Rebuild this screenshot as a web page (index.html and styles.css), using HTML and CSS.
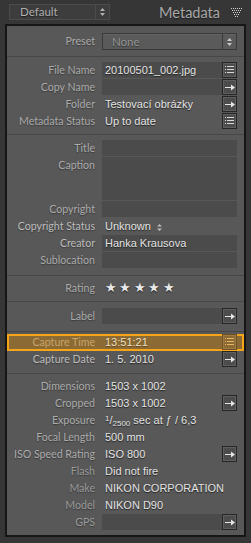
FILE: index.html
```html
<!DOCTYPE html>
<html lang="en">
<head>
  <meta charset="UTF-8" />
  <title>Metadata</title>
  <link rel="stylesheet" href="styles.css">
</head>
<body>
  <div class="topbar">
    <div class="picker">
      <span class="picker-text">Default</span>
      <span class="spin"><svg width="5" height="8" viewBox="0 0 5 8"><path d="M2.5 0L5 3H0z M0 5h5L2.5 8z" fill="#b0b0b0"/></svg></span>
    </div>
    <div class="title">Metadata</div>
    <svg class="collapse" width="11" height="9" viewBox="0 0 11 9">
      <g fill="#d0d0d0">
        <rect x="0" y="0" width="1" height="1"/><rect x="2" y="0" width="1" height="1"/><rect x="4" y="0" width="1" height="1"/><rect x="6" y="0" width="1" height="1"/><rect x="8" y="0" width="1" height="1"/><rect x="10" y="0" width="1" height="1"/>
        <rect x="1" y="2" width="1" height="1"/><rect x="3" y="2" width="1" height="1"/><rect x="5" y="2" width="1" height="1"/><rect x="7" y="2" width="1" height="1"/><rect x="9" y="2" width="1" height="1"/>
        <rect x="2" y="4" width="1" height="1"/><rect x="4" y="4" width="1" height="1"/><rect x="6" y="4" width="1" height="1"/><rect x="8" y="4" width="1" height="1"/>
        <rect x="3" y="6" width="1" height="1"/><rect x="5" y="6" width="1" height="1"/><rect x="7" y="6" width="1" height="1"/>
        <rect x="4" y="8" width="1" height="1"/><rect x="6" y="8" width="1" height="1"/>
      </g>
    </svg>
  </div>

  <div class="panel">
    <section class="group preset-group">
      <div class="row">
        <span class="label">Preset</span>
        <div class="select">
          <span class="select-text">None</span>
          <span class="spin"><svg width="5" height="8" viewBox="0 0 5 8"><path d="M2.5 0L5 3H0z M0 5h5L2.5 8z" fill="#c8c8c8"/></svg></span>
        </div>
      </div>
    </section>

    <section class="group g-file">
      <div class="row">
        <span class="label">File Name</span>
        <div class="value"><span class="field">20100501_002.jpg</span><span class="btn list"></span></div>
      </div>
      <div class="row">
        <span class="label">Copy Name</span>
        <div class="value"><span class="field"></span><span class="btn arrow"></span></div>
      </div>
      <div class="row">
        <span class="label">Folder</span>
        <div class="value"><span class="text">Testovací obrázky</span><span class="btn arrow"></span></div>
      </div>
      <div class="row">
        <span class="label">Metadata Status</span>
        <div class="value"><span class="text">Up to date</span><span class="btn list"></span></div>
      </div>
    </section>

    <section class="group g-desc">
      <div class="row">
        <span class="label">Title</span>
        <div class="value"><span class="field"></span></div>
      </div>
      <div class="row caption">
        <span class="label">Caption</span>
        <div class="value"><span class="field"></span></div>
      </div>
      <div class="row">
        <span class="label">Copyright</span>
        <div class="value"><span class="field"></span></div>
      </div>
      <div class="row">
        <span class="label bright">Copyright Status</span>
        <div class="value"><span class="text">Unknown <svg class="mini-spin" width="5" height="7" viewBox="0 0 5 7"><path d="M2.5 0L5 2.6H0z M0 4.4h5L2.5 7z" fill="#bdbdbd"/></svg></span></div>
      </div>
      <div class="row">
        <span class="label bright">Creator</span>
        <div class="value"><span class="field">Hanka Krausova</span></div>
      </div>
      <div class="row">
        <span class="label">Sublocation</span>
        <div class="value"><span class="field"></span></div>
      </div>
    </section>

    <section class="group g-rating">
      <div class="row">
        <span class="label">Rating</span>
        <div class="value"><span class="stars">★★★★★</span></div>
      </div>
    </section>

    <section class="group g-label">
      <div class="row">
        <span class="label">Label</span>
        <div class="value"><span class="field"></span><span class="btn arrow"></span></div>
      </div>
    </section>

    <section class="group g-capture">
      <div class="row active">
        <span class="label">Capture Time</span>
        <div class="value"><span class="text">13:51:21</span><span class="btn list"></span></div>
      </div>
      <div class="row">
        <span class="label bright">Capture Date</span>
        <div class="value"><span class="text">1. 5. 2010</span><span class="btn arrow"></span></div>
      </div>
    </section>

    <section class="group g-exif">
      <div class="row">
        <span class="label">Dimensions</span>
        <div class="value"><span class="text">1503 x 1002</span></div>
      </div>
      <div class="row">
        <span class="label">Cropped</span>
        <div class="value"><span class="text">1503 x 1002</span><span class="btn arrow"></span></div>
      </div>
      <div class="row">
        <span class="label">Exposure</span>
        <div class="value"><span class="text"><sup>1</sup>/<sub>2500</sub> sec at <i>ƒ</i> / 6,3</span></div>
      </div>
      <div class="row">
        <span class="label">Focal Length</span>
        <div class="value"><span class="text">500 mm</span></div>
      </div>
      <div class="row">
        <span class="label">ISO Speed Rating</span>
        <div class="value"><span class="text">ISO 800</span><span class="btn arrow"></span></div>
      </div>
      <div class="row">
        <span class="label dim">Flash</span>
        <div class="value"><span class="text">Did not fire</span></div>
      </div>
      <div class="row">
        <span class="label dim">Make</span>
        <div class="value"><span class="text">NIKON CORPORATION</span></div>
      </div>
      <div class="row">
        <span class="label dim">Model</span>
        <div class="value"><span class="text">NIKON D90</span></div>
      </div>
      <div class="row">
        <span class="label dim">GPS</span>
        <div class="value"><span class="field"></span><span class="btn arrow"></span></div>
      </div>
    </section>
  </div>
</body>
</html>
```

FILE: styles.css
```css
* {
  margin: 0;
  padding: 0;
  box-sizing: border-box;
}

body {
  background: #363636;
  font-family: 'Liberation Sans', Arial, sans-serif;
  font-size: 11px;
  width: 251px;
  height: 543px;
  overflow: hidden;
}

/* header */

.topbar {
  height: 24px;
  display: flex;
  align-items: center;
  padding: 0 9px;
}

.picker {
  width: 101px;
  height: 16px;
  margin-top: -1px;
  display: flex;
  background: #3d3d3d;
  border: 1px solid #4c4c4c;
}

.picker-text {
  flex: 1;
  padding-left: 10px;
  font-family: Lato, 'Liberation Sans', sans-serif;
  font-size: 11.5px;
  line-height: 14px;
  color: #b0b0b0;
  text-shadow: 0 1px 1px #1e1e1e;
}

.spin {
  width: 14px;
  display: flex;
  align-items: center;
  justify-content: center;
  border-left: 1px solid #4c4c4c;
}

.title {
  margin-left: auto;
  font-family: Lato, 'Liberation Sans', sans-serif;
  font-size: 14.5px;
  color: #a8a8a8;
  text-shadow: 0 1px 1px #1c1c1c;
}

.collapse {
  margin-left: 11px;
  margin-top: 1px;
}

/* panel */

.panel {
  margin: 0 5px;
  background: #585858;
  border: 2px solid #161616;
}

.group + .group {
  border-top: 1px solid #474747;
}

.preset-group { padding: 7px 0 6px; }
.g-file { padding: 5px 0 4px; }
.g-desc { padding: 5px 0 6px; }
.g-rating { padding: 4px 0; }
.g-label { padding: 6px 0; }
.g-capture { padding: 2px 0 5px; }
.g-exif { padding: 4px 0; }

.row {
  display: grid;
  grid-template-columns: 88px 1fr;
  column-gap: 7px;
  height: 17px;
  padding-right: 7px;
  align-items: start;
}

.label {
  text-align: right;
  font-family: Lato, 'Liberation Sans', sans-serif;
  font-size: 10.6px;
  line-height: 17px;
  color: #ababab;
  white-space: nowrap;
  text-shadow: 0 1px 1px #3a3a3a;
}

.label.bright {
  color: #bdbdbd;
}

.label.dim {
  color: #9a9a9a;
}

.value {
  display: flex;
  height: 16px;
}

.field,
.text {
  flex: 1;
  height: 16px;
  padding-left: 3px;
  line-height: 16px;
  color: #e4e4e4;
  white-space: nowrap;
  text-shadow: 0 1px 1px #222;
}

.field {
  background: #4b4b4b;
}

.caption {
  height: 44px;
}

.caption .value,
.caption .field {
  height: 43px;
}

.mini-spin {
  margin-left: 3px;
  vertical-align: -1px;
}

.stars {
  padding-left: 3px;
  line-height: 16px;
  font-size: 13px;
  letter-spacing: 2.4px;
  color: #e8e8e8;
  text-shadow: 0 1px 1px #222;
}

sup,
sub {
  font-size: 8px;
  line-height: 0;
}

sub {
  vertical-align: -2px;
}

sup {
  vertical-align: 3px;
}

i {
  font-style: normal;
}

/* small square buttons */

.btn {
  width: 15px;
  height: 16px;
  border: 1px solid #262626;
  background-color: #4c4c4c;
  box-shadow: inset 0 0 0 1px #5f5f5f;
  background-repeat: no-repeat;
  background-position: center;
}

.btn.list {
  background-image: url("data:image/svg+xml,%3Csvg xmlns='http://www.w3.org/2000/svg' width='9' height='8'%3E%3Cg fill='%23d8d8d8'%3E%3Crect x='0' y='0' width='1' height='1'/%3E%3Crect x='2' y='0' width='7' height='1'/%3E%3Crect x='0' y='3' width='1' height='1'/%3E%3Crect x='2' y='3' width='7' height='1'/%3E%3Crect x='0' y='6' width='1' height='1'/%3E%3Crect x='2' y='6' width='7' height='1'/%3E%3C/g%3E%3C/svg%3E");
}

.btn.arrow {
  background-image: url("data:image/svg+xml,%3Csvg xmlns='http://www.w3.org/2000/svg' width='10' height='7'%3E%3Cpath d='M0 3h7v1H0z M6 0.5L10 3.5L6 6.5z' fill='%23e6e6e6'/%3E%3C/svg%3E");
}

/* preset select */

.select {
  height: 17px;
  display: flex;
  background: #5a5a5a;
  border: 1px solid #3a3a3a;
  box-shadow: inset 0 1px 0 #636363;
}

.select-text {
  flex: 1;
  padding-left: 9px;
  font-family: Lato, 'Liberation Sans', sans-serif;
  font-size: 11.5px;
  line-height: 15px;
  color: #959595;
  text-shadow: 0 1px 1px #333;
}

.select .spin {
  border-left: 1px solid #3a3a3a;
}

/* highlighted row */

.row.active {
  background: #8c6a34;
  box-shadow: inset 0 0 0 2px #f5a51a;
}

.row.active .label {
  color: #c9a468;
  text-shadow: none;
}

.row.active .text {
  color: #f1e2c2;
  text-shadow: 0 1px 1px #5a4220;
}

.row.active .btn {
  border-color: #6e5226;
  background-color: #8c6a34;
  box-shadow: inset 0 0 0 1px #9c7a44;
  background-image: url("data:image/svg+xml,%3Csvg xmlns='http://www.w3.org/2000/svg' width='9' height='8'%3E%3Cg fill='%23e3b566'%3E%3Crect x='0' y='0' width='1' height='1'/%3E%3Crect x='2' y='0' width='7' height='1'/%3E%3Crect x='0' y='3' width='1' height='1'/%3E%3Crect x='2' y='3' width='7' height='1'/%3E%3Crect x='0' y='6' width='1' height='1'/%3E%3Crect x='2' y='6' width='7' height='1'/%3E%3C/g%3E%3C/svg%3E");
}
```
